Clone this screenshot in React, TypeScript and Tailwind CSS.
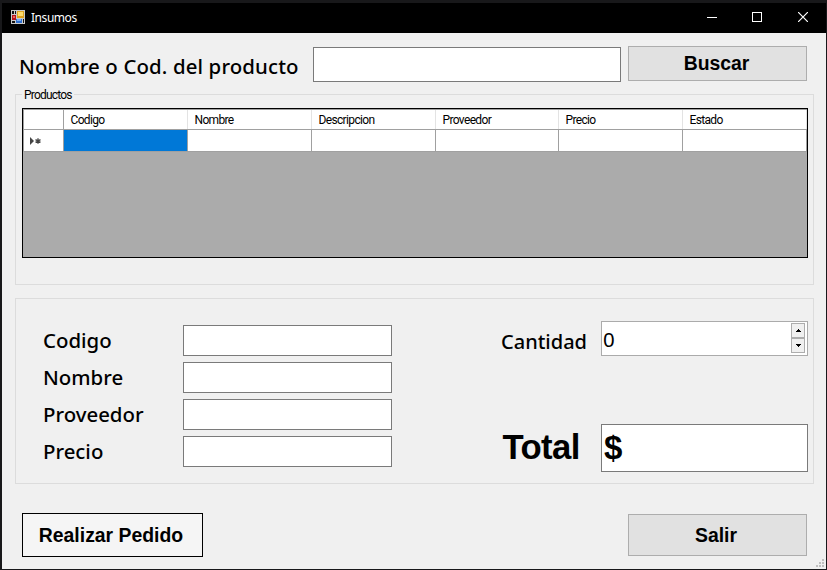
import type { ReactNode } from "react";

const humanist = "font-['Noto_Sans','Open_Sans',sans-serif]";
const grotesk = "font-['Liberation_Sans',Arial,sans-serif]";
const small = "font-['Liberation_Sans_Narrow','Roboto',sans-serif]";

function AppIcon() {
  return (
    <svg width="14" height="14" viewBox="0 0 14 14" shapeRendering="crispEdges">
      <rect width="14" height="14" fill="#c9c9c9" />
      <rect x="1" y="1" width="2" height="3" fill="#111" />
      <rect x="4" y="1" width="1" height="3" fill="#111" />
      <rect x="1" y="5" width="4" height="5" fill="#b5121c" />
      <rect x="2" y="6" width="2" height="2" fill="#e8645c" />
      <rect x="6" y="1" width="7" height="7" fill="#dfa21c" />
      <rect x="7" y="2" width="5" height="4" fill="#ffdc6a" />
      <rect x="1" y="11" width="3" height="2" fill="#111" />
      <rect x="5" y="9" width="6" height="4" fill="#2f6fd0" />
      <rect x="6" y="9" width="4" height="2" fill="#79aef2" />
      <rect x="12" y="9" width="1" height="4" fill="#111" />
    </svg>
  );
}

function TitleBar() {
  return (
    <header className="flex h-[30px] shrink-0 items-center bg-black pl-[9px] text-white">
      <span className="pb-0.5"><AppIcon /></span>
      <span className={`${humanist} ml-1.5 grow text-[12px] tracking-[-0.45px]`}>Insumos</span>
      <button className="flex h-full w-[46px] items-center justify-center" aria-label="Minimizar">
        <svg width="10" height="10" shapeRendering="crispEdges"><path d="M0 4.5h10" stroke="#fff" /></svg>
      </button>
      <button className="flex h-full w-[45px] items-center justify-center pr-0.5 pb-0.5" aria-label="Maximizar">
        <svg width="10" height="10" shapeRendering="crispEdges"><rect x=".5" y=".5" width="9" height="9" fill="none" stroke="#fff" /></svg>
      </button>
      <button className="flex h-full w-[46px] items-center justify-center pb-0.5" aria-label="Cerrar">
        <svg width="10" height="10"><path d="M0 0l10 10M10 0L0 10" stroke="#fff" strokeWidth="1.2" /></svg>
      </button>
    </header>
  );
}

function Button({ className, children }: { className: string; children: ReactNode }) {
  return (
    <button className={`${grotesk} flex items-center justify-center border text-[19.4px] font-bold leading-none ${className}`}>
      {children}
    </button>
  );
}

const columns = [
  { name: "Codigo", width: "w-[124px]" },
  { name: "Nombre", width: "w-[124px]" },
  { name: "Descripcion", width: "w-[124px]" },
  { name: "Proveedor", width: "w-[123px]" },
  { name: "Precio", width: "w-[124px]" },
  { name: "Estado", width: "w-[124px]" },
];

function ProductGrid() {
  return (
    <div className={`${small} h-[150px] border border-black bg-[#ababab] text-[12px]`}>
      <div className="flex h-[21px] border-y border-[#a0a0a0] bg-white">
        <div className="w-[41px] border-x border-[#a0a0a0]" />
        {columns.map((c) => (
          <div key={c.name} className={`${c.width} flex items-center border-r border-[#e3e3e3] pl-[6.5px] tracking-[-0.65px]`}>
            {c.name}
          </div>
        ))}
      </div>
      <div className="flex h-[22px] border-b border-[#a0a0a0] bg-white">
        <div className="flex w-[41px] items-center border-x border-[#a0a0a0] pl-1.5 pt-px">
          <svg width="11" height="8" viewBox="0 0 11 8">
            <path d="M0 0l4 4-4 4z" fill="#444" />
            <path d="M8 1.3v5.4M5.5 2.6l5 2.8M10.5 2.6l-5 2.8" stroke="#444" strokeWidth="1.3" />
          </svg>
        </div>
        {columns.map((c, i) => (
          <div key={c.name} className={`${c.width} border-r border-[#a0a0a0] ${i === 0 ? "bg-[#0078d7]" : "bg-white"}`} />
        ))}
      </div>
    </div>
  );
}

function Field({ label }: { label: string }) {
  return (
    <label className="flex h-[31px] items-center">
      <span className={`${humanist} w-[140px] text-[20.4px] font-medium leading-[31px]`}>{label}</span>
      <span className="h-[31px] w-[209px] border border-[#7a7a7a] bg-white" />
    </label>
  );
}

function Spinner() {
  return (
    <div className="flex h-[35px] w-[207px] items-center justify-between border border-[#ababab] bg-white pl-px pr-px">
      <span className={`${humanist} pt-0.5 text-[20.5px] leading-none`}>0</span>
      <div className="mb-px mr-px flex w-[14px] flex-col">
        <div className="flex h-[15px] items-center justify-center border border-[#adadad] bg-[#f0f0f0]">
          <svg width="5" height="3" shapeRendering="crispEdges"><path d="M2 0h1v1h1v1h1v1H0V2h1V1h1z" /></svg>
        </div>
        <div className="flex h-[15px] items-center justify-center border border-[#adadad] bg-[#f0f0f0]">
          <svg width="5" height="3" shapeRendering="crispEdges"><path d="M0 0h5v1H4v1H3v1H2V2H1V1H0z" /></svg>
        </div>
      </div>
    </div>
  );
}

export default function App() {
  return (
    <div className="h-[570px] w-[827px] overflow-hidden bg-[#18181a] pl-[2px] pr-px pt-[3px] text-black">
      <div className="relative flex h-[566px] flex-col bg-[#f0f0f0]">
        <TitleBar />
        <main className="flex flex-col">
          <div className="flex h-[61px] items-start pl-[17px] pt-[13px]">
            <span className={`${humanist} mt-[6px] w-[294px] whitespace-nowrap text-[20.4px] font-medium leading-[28px] tracking-[0.13px]`}>
              Nombre o Cod. del producto
            </span>
            <span className="mt-px h-[35px] w-[308px] border border-[#7a7a7a] bg-white" />
            <Button className="ml-[7px] h-[35px] w-[179px] border-[#adadad] bg-[#e1e1e1] pr-0.5">Buscar</Button>
          </div>

          <section className="relative ml-[13px] h-[191px] w-[799px] border border-[#dcdcdc] pl-[6px] pr-[5px] pt-[13px]">
            <h2 className={`${small} absolute left-[6px] top-[-7px] bg-[#f0f0f0] px-0.5 text-[12px] leading-[14px] tracking-[-0.8px]`}>
              Productos
            </h2>
            <ProductGrid />
          </section>

          <section className="ml-[13px] mt-[13px] flex h-[186px] w-[799px] justify-between border border-[#dcdcdc] pl-[27px] pr-[5px]">
            <div className="flex flex-col gap-1.5 pt-[26px]">
              <Field label="Codigo" />
              <Field label="Nombre" />
              <Field label="Proveedor" />
              <Field label="Precio" />
            </div>
            <div className="flex flex-col gap-[68px] pt-[22px]">
              <div className="flex items-center">
                <span className={`${humanist} w-[100px] pt-1.5 text-[20px] font-medium leading-none`}>Cantidad</span>
                <Spinner />
              </div>
              <div className={`${grotesk} flex items-center text-[34.7px] font-bold leading-none`}>
                <span className="w-[100px] pb-0.5 pl-[1.5px] tracking-[-0.6px]">Total</span>
                <span className="flex h-[48px] w-[207px] items-center border border-[#7a7a7a] bg-white pb-0.5 pl-[2px]">
                  <span className="text-[33px]">$</span>
                </span>
              </div>
            </div>
          </section>

          <div className="mt-[29px] flex items-center justify-between pl-5 pr-[19px]">
            <Button className="h-[44px] w-[181px] border-black bg-[#f5f5f5] pr-[3px] pt-0.5">Realizar Pedido</Button>
            <Button className="h-[42px] w-[179px] border-[#adadad] bg-[#e1e1e1] pr-[3px] pt-0.5">Salir</Button>
          </div>
        </main>
        <svg className="absolute bottom-[2px] right-[2px]" width="8" height="8" fill="#bfbfbf" shapeRendering="crispEdges">
          <path d="M6 0h2v2H6zM3 3h2v2H3zM6 3h2v2H6zM0 6h2v2H0zM3 6h2v2H3zM6 6h2v2H6z" />
        </svg>
      </div>
    </div>
  );
}
